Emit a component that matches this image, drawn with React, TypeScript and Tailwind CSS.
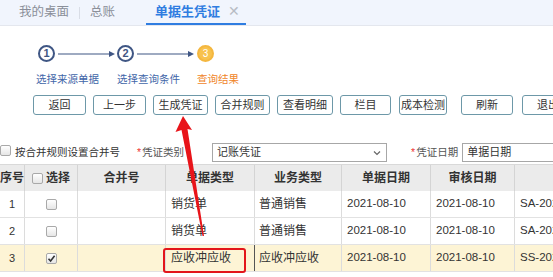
const cjk = { fontFamily: '"Liberation Sans", "Noto Sans CJK SC", sans-serif' };

function Box({ checked = false }: { checked?: boolean }) {
  return (
    <span className="inline-flex h-[11px] w-[11px] shrink-0 items-center justify-center rounded-[2px] border border-[#a9a9a9] bg-gradient-to-b from-white to-[#e6e6e6]">
      {checked && (
        <svg width="9" height="9" viewBox="0 0 9 9">
          <path d="M1.5 4.8 L3.6 7 L7.6 1.8" fill="none" stroke="#333" strokeWidth="1.6" />
        </svg>
      )}
    </span>
  );
}

function StepCircle({ n, active = false }: { n: number; active?: boolean }) {
  return (
    <div
      className={
        active
          ? "flex h-[17px] w-[17px] items-center justify-center rounded-full border-2 border-[#f4b73f] bg-[#f8c24e] text-[10px] text-white"
          : "flex h-[17px] w-[17px] items-center justify-center rounded-full border-2 border-[#3f5684] bg-white text-[11px] font-bold text-[#3f5684]"
      }
    >
      {n}
    </div>
  );
}

function StepArrow() {
  return (
    <svg width="58" height="8" viewBox="0 0 58 8" className="block">
      <line x1="1" y1="4" x2="54" y2="4" stroke="#3f5684" strokeWidth="1.2" />
      <path d="M52 1 L58 4 L52 7 Z" fill="#3f5684" />
    </svg>
  );
}

const buttons: [string, number, number][] = [
  ["返回", 33, 53],
  ["上一步", 7, 53],
  ["生成凭证", 7, 55],
  ["合并规则", 7, 55],
  ["查看明细", 7, 56],
  ["栏目", 7, 51],
  ["成本检测", 8, 48],
  ["刷新", 14, 52],
  ["退出", 9, 52],
];

const rows = [
  { no: 1, checked: false, type: "销货单", biz: "普通销售", d1: "2021-08-10", d2: "2021-08-10", code: "SA-2021080001" },
  { no: 2, checked: false, type: "销货单", biz: "普通销售", d1: "2021-08-10", d2: "2021-08-10", code: "SA-2021080002" },
  { no: 3, checked: true, type: "应收冲应收", biz: "应收冲应收", d1: "2021-08-10", d2: "2021-08-10", code: "SS-2021080001" },
];

const cols = "grid grid-cols-[25px_53px_88px_89px_87px_89px_84px_130px]";

export default function App() {
  return (
    <div className="relative h-[277px] w-[553px] overflow-hidden bg-white text-[#333]" style={cjk}>
      {/* tabs */}
      <div className="flex h-[26px] items-end border-b border-[#e4e7ee] bg-[#f1f5fd]">
        <div className="flex h-[25px] items-center pl-[19px] text-[12.5px] text-[#8a8f99]">
          <span>我的桌面</span>
          <span className="mx-[10px] h-[12px] w-px bg-[#d9dde6]" />
          <span>总账</span>
        </div>
        <div className="ml-[31px] flex h-[25px] w-[100px] items-center border-b-2 border-[#2f7de1] pl-[9px] text-[13px] font-bold text-[#2f7de1]">
          单据生凭证
          <span className="ml-[8px] text-[14px] font-normal text-[#b8bcc4]">✕</span>
        </div>
      </div>

      {/* steps */}
      <div className="flex items-center pl-[38px] pt-[19px]">
        <StepCircle n={1} />
        <div className="ml-[2px]"><StepArrow /></div>
        <div className="ml-[2px]"><StepCircle n={2} /></div>
        <div className="ml-[2px]"><StepArrow /></div>
        <div className="ml-[3px]"><StepCircle n={3} active /></div>
      </div>
      <div className="mt-[10px] flex pl-[36px] text-[10.5px] leading-[14px] text-[#3f66a8]">
        <span>选择来源单据</span>
        <span className="ml-[18px]">选择查询条件</span>
        <span className="ml-[17px] text-[#f0862a]">查询结果</span>
      </div>

      {/* toolbar */}
      <div className="mt-[9px] flex h-[20px]">
        {buttons.map(([label, ml, w]) => (
          <div
            key={label}
            className="flex shrink-0 items-center justify-center whitespace-nowrap rounded-[3px] border border-[#6d98a8] bg-white text-[11px] text-[#333]"
            style={{ marginLeft: ml, width: w }}
          >
            {label}
          </div>
        ))}
      </div>

      {/* options */}
      <div className="mt-[28px] flex h-[19px] items-center whitespace-nowrap text-[10.5px]">
        <span className="shrink-0"><Box /></span>
        <span className="ml-[4px] shrink-0">按合并规则设置合并号</span>
        <span className="ml-[17px] shrink-0 text-[#e33]">*</span>
        <span className="ml-[1px] shrink-0 text-[#555]">凭证类别</span>
        <div className="ml-[28px] flex h-[19px] w-[175px] shrink-0 items-center justify-between border border-[#a7a7a7] pl-[4px] pr-[5px] text-[11px]">
          <span>记账凭证</span>
          <svg width="8" height="6" viewBox="0 0 8 6"><path d="M1 1.5 L4 4.5 L7 1.5" fill="none" stroke="#666" strokeWidth="1.2" /></svg>
        </div>
        <span className="ml-[24px] shrink-0 text-[#e33]">*</span>
        <span className="ml-[1px] shrink-0 text-[#555]">凭证日期</span>
        <div className="ml-[4px] flex h-[19px] w-[110px] shrink-0 items-center border border-[#a7a7a7] pl-[4px] text-[11px]">
          单据日期
        </div>
      </div>

      {/* table */}
      <div className="mt-[2px] w-[700px] border-t border-[#d9d9d9]">
        <div className={`${cols} h-[26px] bg-[#ebebeb] text-[12px] font-bold text-[#333]`}>
          <div className="flex items-center justify-center border-r border-[#d4d4d4]">序号</div>
          <div className="flex items-center justify-center gap-[3px] border-r border-[#d4d4d4]"><Box />选择</div>
          <div className="flex items-center justify-center border-r border-[#d4d4d4]">合并号</div>
          <div className="flex items-center justify-center border-r border-[#d4d4d4]">单据类型</div>
          <div className="flex items-center justify-center border-r border-[#d4d4d4]">业务类型</div>
          <div className="flex items-center justify-center border-r border-[#d4d4d4]">单据日期</div>
          <div className="flex items-center justify-center border-r border-[#d4d4d4]">审核日期</div>
          <div className="flex items-center justify-center border-r border-[#d4d4d4]"></div>
        </div>
        {rows.map((r) => (
          <div
            key={r.no}
            className={`${cols} h-[27px] border-b border-[#e2e2e2] text-[12px] ${r.checked ? "bg-[#fdf4d5]" : "bg-white"}`}
          >
            <div className="flex items-center justify-center border-r border-[#dcdcdc] text-[11px]">{r.no}</div>
            <div className="flex items-center justify-center border-r border-[#dcdcdc]"><Box checked={r.checked} /></div>
            <div className="border-r border-[#dcdcdc]" />
            <div className={`flex items-center pl-[5px] border-r ${r.checked ? "border-[#555]" : "border-[#dcdcdc]"}`}>{r.type}</div>
            <div className="flex items-center pl-[4px] border-r border-[#dcdcdc]">{r.biz}</div>
            <div className="flex items-center pl-[5px] border-r border-[#dcdcdc] text-[11.5px]">{r.d1}</div>
            <div className="flex items-center pl-[5px] border-r border-[#dcdcdc] text-[11.5px]">{r.d2}</div>
            <div className="flex items-center pl-[5px] border-r border-[#dcdcdc] text-[11.5px]">{r.code}</div>
          </div>
        ))}
      </div>

      {/* annotations */}
      <div className="absolute left-[163px] top-[248px] h-[25px] w-[83px] rounded-[3px] border-2 border-[#e3161b]" />
      <svg className="pointer-events-none absolute left-0 top-0" width="553" height="277" viewBox="0 0 553 277">
        <polygon points="183,116 192,130 187.5,129 204,236 202.5,236 181.5,130 175.5,132" fill="#e8141a" />
      </svg>
    </div>
  );
}
